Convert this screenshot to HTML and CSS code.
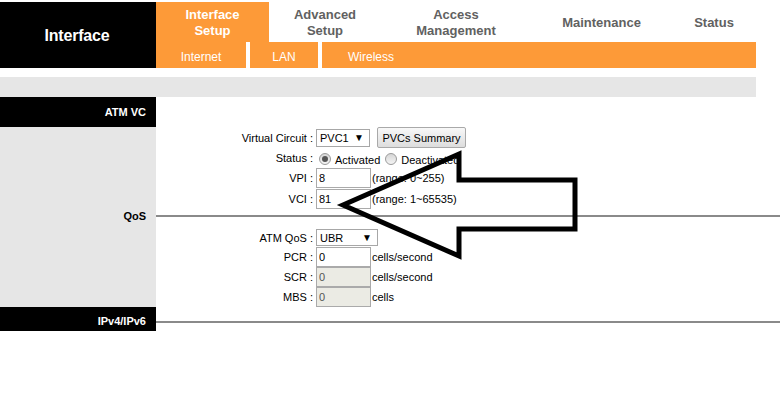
FILE: index.html
```html
<!DOCTYPE html>
<html>
<head>
<meta charset="utf-8">
<link rel="stylesheet" href="styles.css">
</head>
<body>
<div class="page">
  <header class="top">
    <div class="brand">Interface</div>
    <div class="navwrap">
      <nav class="tabs">
        <div class="tab tab-1 active">Interface<br>Setup</div>
        <div class="tab tab-2">Advanced<br>Setup</div>
        <div class="tab tab-3">Access<br>Management</div>
        <div class="tab tab-4">Maintenance</div>
        <div class="tab tab-5">Status</div>
      </nav>
      <nav class="subnav">
        <div class="sub sub-1">Internet</div>
        <div class="sep"></div>
        <div class="sub sub-2">LAN</div>
        <div class="sep"></div>
        <div class="sub sub-3">Wireless</div>
      </nav>
    </div>
  </header>
  <div class="graybar"></div>
  <div class="main">
    <div class="side side-dark row-a">ATM VC</div>
    <div class="content row-a"></div>

    <div class="side row-b"></div>
    <div class="content form row-b">
      <div class="frow r21">
        <span class="lbl">Virtual Circuit :</span>
        <span class="field">
          <span class="select sel-vc">PVC1<span class="caret">▼</span></span>
          <span class="btn">PVCs Summary</span>
        </span>
      </div>
      <div class="frow r19">
        <span class="lbl">Status :</span>
        <span class="field radios">
          <span class="radio on"></span><span class="rtext">Activated</span>
          <span class="radio"></span><span class="rtext">Deactivated</span>
        </span>
      </div>
      <div class="frow r21">
        <span class="lbl">VPI :</span>
        <span class="field"><input class="txt" value="8"><span class="note">(range: 0~255)</span></span>
      </div>
      <div class="frow r21">
        <span class="lbl">VCI :</span>
        <span class="field"><input class="txt" value="81"><span class="note">(range: 1~65535)</span></span>
      </div>
    </div>

    <div class="side side-label row-c">QoS</div>
    <div class="content rule row-c"><div class="line"></div></div>

    <div class="side row-d"></div>
    <div class="content form row-d">
      <div class="frow r24 qos">
        <span class="lbl">ATM QoS :</span>
        <span class="field"><span class="select sel-qos">UBR<span class="caret">▼</span></span></span>
      </div>
      <div class="frow r20">
        <span class="lbl">PCR :</span>
        <span class="field"><input class="txt" value="0"><span class="note">cells/second</span></span>
      </div>
      <div class="frow r20">
        <span class="lbl">SCR :</span>
        <span class="field"><input class="txt dis" value="0" disabled><span class="note">cells/second</span></span>
      </div>
      <div class="frow r20">
        <span class="lbl">MBS :</span>
        <span class="field"><input class="txt dis" value="0" disabled><span class="note">cells</span></span>
      </div>
    </div>

    <div class="side side-dark row-e">IPv4/IPv6</div>
    <div class="content rule rule-e row-e"><div class="line"></div></div>
  </div>

  <svg class="arrow" width="780" height="400" viewBox="0 0 780 400">
    <polygon points="343,205 459,154 459,180 575,180 575,229 459,229 459,256" fill="none" stroke="#000" stroke-width="5" stroke-linejoin="miter"/>
  </svg>
</div>
</body>
</html>
```

FILE: styles.css
```css
* { box-sizing: border-box; }
html, body {
  margin: 0;
  padding: 0;
  background: #fff;
}
body {
  font-family: "Liberation Sans", Arial, sans-serif;
  font-size: 11px;
  color: #000;
}
.page {
  position: relative;
  width: 780px;
  height: 400px;
  padding-top: 2px;
  overflow: hidden;
}
.top {
  display: flex;
  height: 66px;
}
.brand {
  width: 156px;
  background: #000;
  color: #fff;
  font-size: 16px;
  font-weight: bold;
  letter-spacing: -0.2px;
  display: flex;
  align-items: center;
  justify-content: center;
  padding-top: 2px;
  padding-right: 2px;
}
.navwrap {
  width: 600px;
  display: flex;
  flex-direction: column;
}
.tabs {
  display: flex;
  height: 40px;
}
.tab {
  display: flex;
  align-items: center;
  justify-content: center;
  text-align: center;
  font-size: 13px;
  font-weight: bold;
  line-height: 16px;
  color: #616161;
  padding-top: 2px;
}
.tab.active {
  background: #fd9a38;
  color: #fff;
}
.tab-1 { width: 113px; }
.tab-2 { width: 112px; }
.tab-3 { width: 150px; }
.tab-4 { width: 141px; }
.tab-5 { width: 84px; }
.subnav {
  display: flex;
  height: 26px;
  background: #fd9a38;
}
.sub {
  display: flex;
  align-items: center;
  justify-content: center;
  color: #fff;
  font-size: 12px;
  padding-top: 4px;
}
.sub-1 { width: 90px; }
.sub-2 { width: 68px; }
.sub-3 { width: 98px; }
.sep {
  width: 4px;
  background: #fff;
}
.graybar {
  margin-top: 9px;
  width: 756px;
  height: 20px;
  background: #e6e6e6;
}
.main {
  display: grid;
  grid-template-columns: 156px 624px;
  grid-template-rows: 30px 82px 14px 84px 24px;
}
.side {
  background: #e6e6e6;
  text-align: right;
  padding-right: 10px;
  font-weight: bold;
  font-size: 11px;
  display: flex;
  align-items: center;
  justify-content: flex-end;
}
.side-dark {
  background: #000;
  color: #fff;
}
.row-e.side-dark { padding-top: 4px; }
.form {
  display: flex;
  flex-direction: column;
}
.frow {
  display: flex;
  align-items: center;
}
.r21 { height: 21px; }
.r19 { height: 19px; }
.r20 { height: 20px; }
.r24 { height: 24px; }
.qos { align-items: flex-end; padding-bottom: 1px; }
.lbl {
  width: 157px;
  text-align: right;
  white-space: nowrap;
}
.qos .lbl { padding-bottom: 2px; }
.field {
  margin-left: 3px;
  display: flex;
  align-items: center;
}
.select {
  position: relative;
  display: flex;
  align-items: center;
  height: 18px;
  border: 1px solid #a7a7a7;
  padding-left: 3px;
  font-size: 11px;
  background: #fff;
}
.sel-vc { width: 54px; }
.sel-qos { width: 62px; height: 17px; }
.caret {
  position: absolute;
  right: 5px;
  top: 3px;
  font-size: 10px;
  line-height: 10px;
}
.btn {
  margin-left: 7px;
  width: 89px;
  height: 21px;
  border: 1px solid #a9a9a9;
  border-radius: 2px;
  background: linear-gradient(#f8f8f8, #dddddd);
  display: flex;
  align-items: center;
  justify-content: center;
  font-size: 11px;
}
.radios { padding-top: 2px; }
.radio {
  width: 12px;
  height: 12px;
  border-radius: 50%;
  border: 1px solid #9a9a9a;
  background: linear-gradient(#d6d6d6, #f4f4f4);
  margin-left: 3px;
  position: relative;
}
.radio.on::after {
  content: "";
  position: absolute;
  left: 2px;
  top: 2px;
  width: 6px;
  height: 6px;
  border-radius: 50%;
  background: #555;
}
.rtext {
  margin-left: 4px;
  padding-top: 3px;
}
.rtext + .radio { margin-left: 5px; }
.txt {
  width: 55px;
  height: 20px;
  border: 1px solid #aaa;
  padding: 0 2px;
  margin: 0;
  font-family: "Liberation Sans", Arial, sans-serif;
  font-size: 11px;
  color: #000;
  background: #fff;
  outline: none;
}
.txt.dis {
  background: #ebebe4;
  color: #555;
}
.note {
  margin-left: 1px;
}
.rule {
  display: flex;
  align-items: center;
}
.rule-e {
  align-items: flex-end;
  padding-bottom: 8px;
}
.line {
  width: 100%;
  height: 2px;
  background: #8a8a8a;
}
.arrow {
  position: absolute;
  left: 0;
  top: 0;
  pointer-events: none;
}
```
